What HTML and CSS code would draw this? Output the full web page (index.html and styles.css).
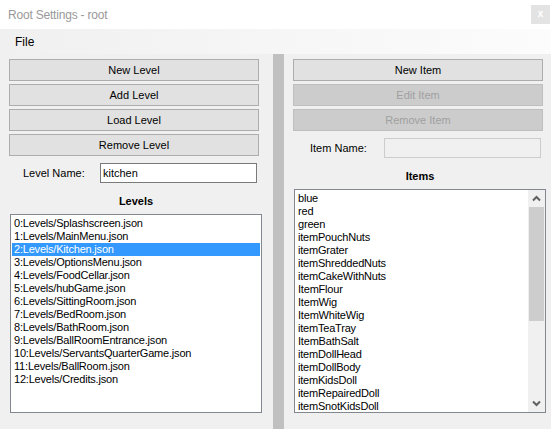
FILE: index.html
```html
<!DOCTYPE html>
<html>
<head>
<meta charset="utf-8">
<link rel="stylesheet" href="styles.css">
</head>
<body>
<div class="window">
  <div class="titlebar">
    <span class="title">Root Settings - root</span>
    <div class="close">x</div>
  </div>
  <div class="menubar"><span class="menu-item">File</span></div>
  <div class="main">
    <div class="panel panel-left">
      <div class="btn">New Level</div>
      <div class="btn">Add Level</div>
      <div class="btn">Load Level</div>
      <div class="btn">Remove Level</div>
      <div class="name-row">
        <span class="label label-left">Level Name:</span>
        <input class="textbox" type="text" value="kitchen">
      </div>
      <div class="heading">Levels</div>
      <div class="listbox listbox-levels">
        <div class="rows">
          <div class="row">0:Levels/Splashscreen.json</div>
          <div class="row">1:Levels/MainMenu.json</div>
          <div class="row selected">2:Levels/Kitchen.json</div>
          <div class="row">3:Levels/OptionsMenu.json</div>
          <div class="row">4:Levels/FoodCellar.json</div>
          <div class="row">5:Levels/hubGame.json</div>
          <div class="row">6:Levels/SittingRoom.json</div>
          <div class="row">7:Levels/BedRoom.json</div>
          <div class="row">8:Levels/BathRoom.json</div>
          <div class="row">9:Levels/BallRoomEntrance.json</div>
          <div class="row">10:Levels/ServantsQuarterGame.json</div>
          <div class="row">11:Levels/BallRoom.json</div>
          <div class="row">12:Levels/Credits.json</div>
        </div>
      </div>
    </div>
    <div class="splitter"></div>
    <div class="panel panel-right">
      <div class="btn">New Item</div>
      <div class="btn disabled">Edit Item</div>
      <div class="btn disabled">Remove Item</div>
      <div class="name-row">
        <span class="label label-right">Item Name:</span>
        <input class="textbox textbox-disabled" type="text" value="" disabled>
      </div>
      <div class="heading">Items</div>
      <div class="listbox listbox-items">
        <div class="rows">
          <div class="row">blue</div>
          <div class="row">red</div>
          <div class="row">green</div>
          <div class="row">itemPouchNuts</div>
          <div class="row">itemGrater</div>
          <div class="row">itemShreddedNuts</div>
          <div class="row">itemCakeWithNuts</div>
          <div class="row">ItemFlour</div>
          <div class="row">ItemWig</div>
          <div class="row">ItemWhiteWig</div>
          <div class="row">itemTeaTray</div>
          <div class="row">ItemBathSalt</div>
          <div class="row">itemDollHead</div>
          <div class="row">itemDollBody</div>
          <div class="row">itemKidsDoll</div>
          <div class="row">itemRepairedDoll</div>
          <div class="row">itemSnotKidsDoll</div>
        </div>
        <div class="scrollbar">
          <div class="sb-btn">
            <svg width="9" height="7" viewBox="0 0 9 7"><polyline points="1,5.5 4.5,2 8,5.5" fill="none" stroke="#606060" stroke-width="2"/></svg>
          </div>
          <div class="sb-track">
            <div class="sb-thumb"></div>
          </div>
          <div class="sb-btn">
            <svg width="9" height="7" viewBox="0 0 9 7"><polyline points="1,1.5 4.5,5 8,1.5" fill="none" stroke="#606060" stroke-width="2"/></svg>
          </div>
        </div>
      </div>
    </div>
  </div>
</div>
</body>
</html>
```

FILE: styles.css
```css
* {
  box-sizing: border-box;
}

html, body {
  margin: 0;
  padding: 0;
  background: #f0f0f0;
}

.window {
  width: 551px;
  height: 429px;
  display: flex;
  flex-direction: column;
  font-family: "Liberation Sans", Arial, sans-serif;
  font-size: 11px;
  color: #000;
  overflow: hidden;
}

.titlebar {
  height: 29px;
  background: #ffffff;
  display: flex;
  align-items: center;
  justify-content: space-between;
  padding-left: 8px;
  padding-right: 1px;
}

.title {
  font-size: 12px;
  color: #999999;
  letter-spacing: -0.2px;
}

.close {
  width: 19px;
  height: 19px;
  background: #e3e3e3;
  color: #ffffff;
  font-size: 10px;
  font-weight: bold;
  line-height: 18px;
  text-align: center;
}

.menubar {
  height: 25px;
  background: linear-gradient(to right, #f0f0f0, #fcfcfc);
  display: flex;
  align-items: center;
  padding-left: 15px;
}

.menu-item {
  font-size: 12px;
  color: #000;
}

.main {
  flex: 1;
  display: flex;
  background: #f0f0f0;
}

.panel {
  display: flex;
  flex-direction: column;
  padding-top: 5px;
}

.panel-left {
  width: 273px;
}

.panel-right {
  width: 267px;
}

.splitter {
  width: 11px;
  background: #c0c0c0;
}

.btn {
  margin-left: 9px;
  width: 250px;
  height: 22px;
  margin-bottom: 3px;
  background: #e1e1e1;
  border: 1px solid #adadad;
  text-align: center;
  line-height: 20px;
}

.btn.disabled {
  background: #cccccc;
  border-color: #bfbfbf;
  color: #a0a0a0;
}

.name-row {
  margin-top: 4px;
  height: 20px;
  display: flex;
  align-items: center;
}

.label-left {
  margin-left: 23px;
  width: 77px;
}

.label-right {
  margin-left: 26px;
  width: 74px;
}

.textbox {
  width: 157px;
  height: 20px;
  margin: 0;
  padding: 0 0 0 2px;
  border: 1px solid #7a7a7a;
  background: #ffffff;
  font-family: "Liberation Sans", Arial, sans-serif;
  font-size: 11px;
  color: #000;
  outline: none;
}

.textbox-disabled {
  background: #f0f0f0;
  border-color: #cccccc;
}

.heading {
  height: 31px;
  padding-top: 11px;
  line-height: 14px;
  font-weight: bold;
  text-align: center;
  width: 252px;
  margin-left: 10px;
}

.listbox {
  margin-left: 10px;
  width: 252px;
  border: 1px solid #828790;
  background: #ffffff;
  display: flex;
  overflow: hidden;
}

.listbox-levels {
  height: 199px;
}

.listbox-items {
  height: 224px;
}

.rows {
  flex: 1;
  padding: 2px 1px 0 1px;
  overflow: hidden;
}

.row {
  height: 13px;
  line-height: 13px;
  padding-left: 2px;
  white-space: nowrap;
  letter-spacing: -0.2px;
}

.row.selected {
  background: #3399ff;
  color: #ffffff;
}

.scrollbar {
  width: 17px;
  background: #f0f0f0;
  display: flex;
  flex-direction: column;
}

.sb-btn {
  height: 17px;
  display: flex;
  align-items: center;
  justify-content: center;
}

.sb-track {
  flex: 1;
}

.sb-thumb {
  height: 114px;
  margin: 0 1px;
  background: #cdcdcd;
}
```
